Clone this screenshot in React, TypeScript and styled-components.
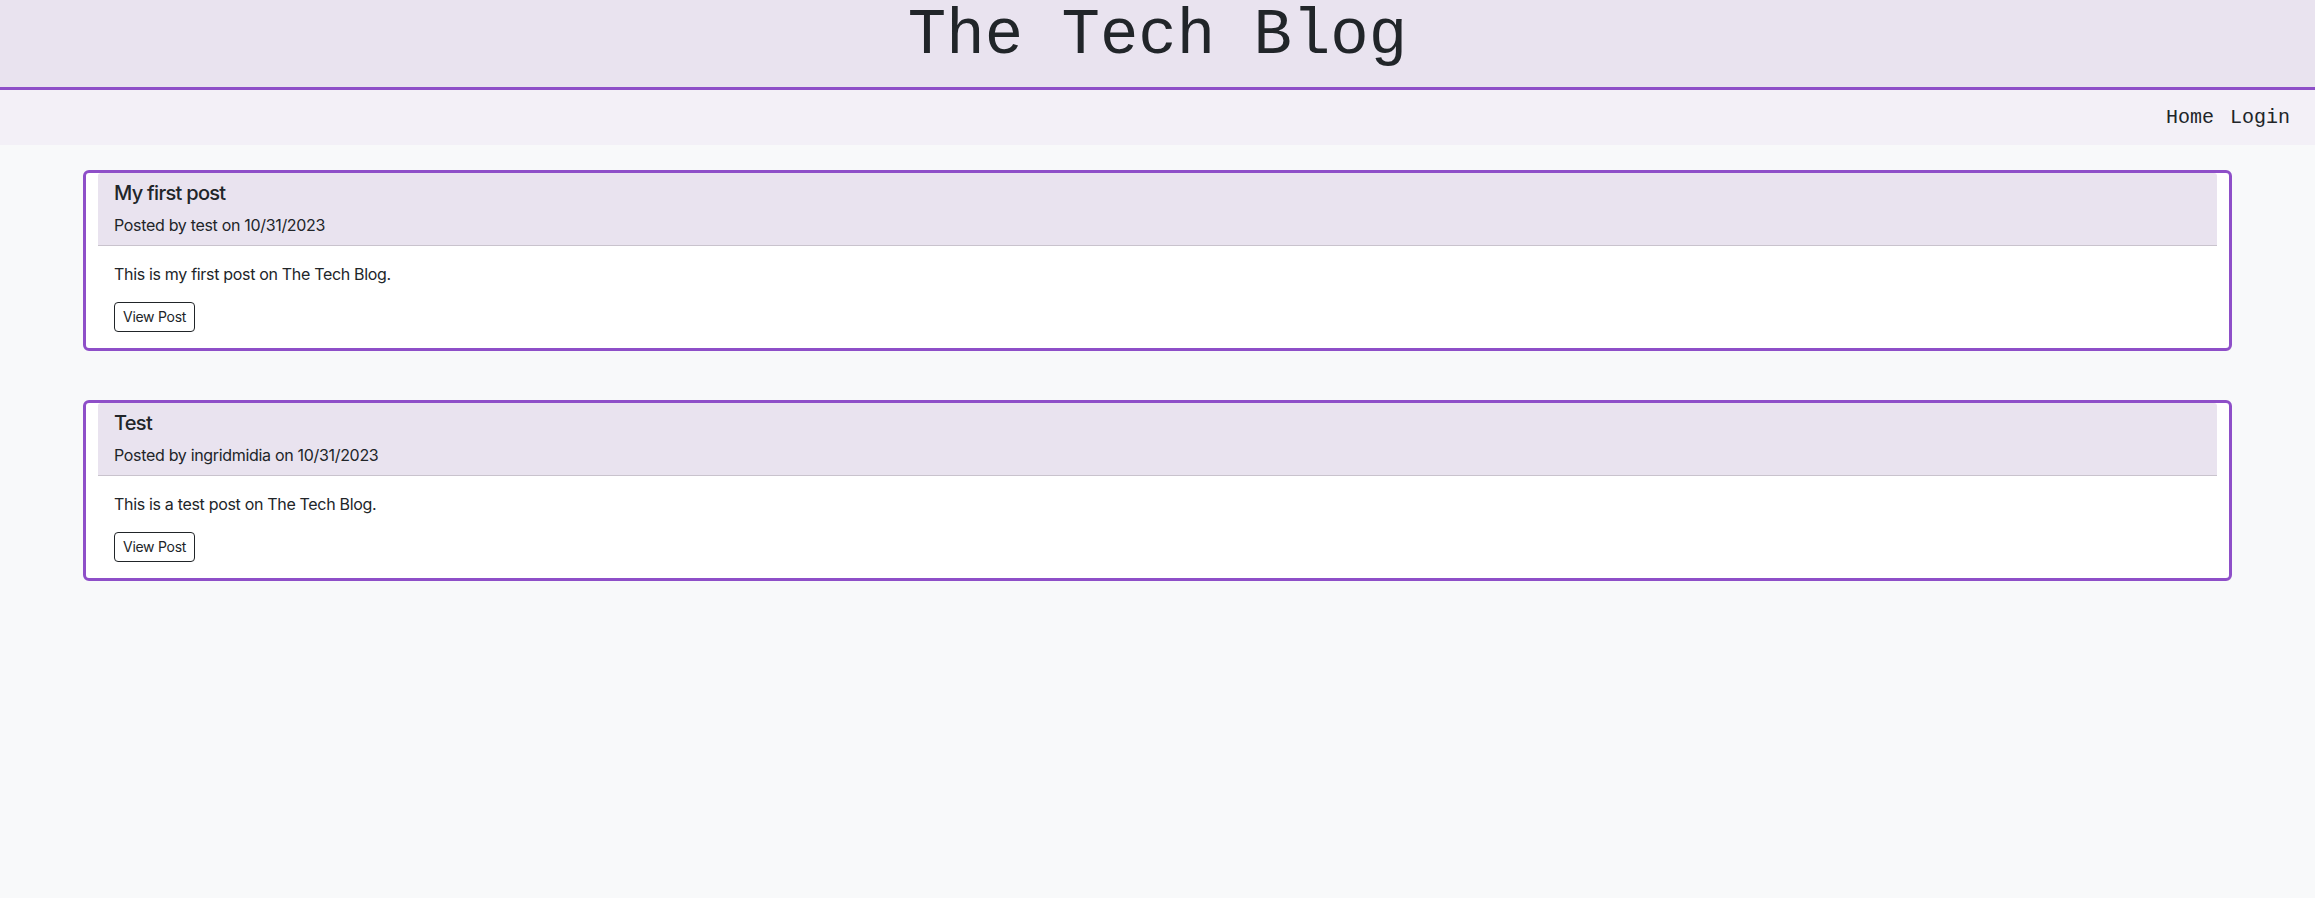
import React from 'react';
import styled, { createGlobalStyle } from 'styled-components';

const GlobalStyle = createGlobalStyle`
  html, body {
    margin: 0;
    padding: 0;
    background-color: #f8f9fa;
    color: #212529;
    font-family: Inter, "Noto Sans", sans-serif;
    letter-spacing: -0.02em;
  }
`;

const PURPLE = '#8e4fc8';

interface Post {
  id: number;
  title: string;
  author: string;
  date: string;
  body: string;
}

const posts: Post[] = [
  {
    id: 1,
    title: 'My first post',
    author: 'test',
    date: '10/31/2023',
    body: 'This is my first post on The Tech Blog.',
  },
  {
    id: 2,
    title: 'Test',
    author: 'ingridmidia',
    date: '10/31/2023',
    body: 'This is a test post on The Tech Blog.',
  },
];

const Masthead = styled.header`
  display: flex;
  justify-content: center;
  align-items: center;
  height: 72px;
  padding-bottom: 15px;
  background-color: #e9e3ef;
  border-bottom: 3px solid ${PURPLE};
`;

const SiteTitle = styled.h1`
  margin: 0;
  font-family: "Liberation Mono", "Courier New", monospace;
  font-size: 64px;
  font-weight: 400;
  line-height: 1;
  letter-spacing: 0;
  color: #212529;
`;

const NavBar = styled.nav`
  display: flex;
  justify-content: flex-end;
  align-items: center;
  gap: 16px;
  height: 55px;
  padding: 0 25px;
  background-color: #f3f0f7;
`;

const NavLink = styled.a`
  font-family: "Liberation Mono", "Courier New", monospace;
  font-size: 20px;
  letter-spacing: 0;
  color: #212529;
  text-decoration: none;
  cursor: pointer;
`;

const PostList = styled.main`
  display: flex;
  flex-direction: column;
  gap: 49px;
  padding: 25px 83px;
`;

const Card = styled.article`
  display: flex;
  flex-direction: column;
  background-color: #fff;
  border: 3px solid ${PURPLE};
  border-radius: 6px;
`;

const CardHeader = styled.div`
  margin: 0 12px;
  padding: 8px 16px;
  background-color: #e9e3ef;
  border-bottom: 1px solid #c9c3cd;
  border-radius: 3px 3px 0 0;
`;

const PostTitle = styled.h5`
  margin: 0 0 8px;
  font-size: 20px;
  font-weight: 500;
  line-height: 24px;
  letter-spacing: -0.035em;
`;

const Meta = styled.p`
  margin: 0;
  font-size: 16px;
  line-height: 24px;
`;

const CardBody = styled.div`
  padding: 16px 28px;
`;

const BodyText = styled.p`
  margin: 0 0 16px;
  font-size: 16px;
  line-height: 24px;
`;

const ViewButton = styled.button`
  padding: 4px 8px;
  font-family: Inter, "Noto Sans", sans-serif;
  font-size: 14px;
  line-height: 20px;
  letter-spacing: -0.02em;
  color: #212529;
  background-color: #fff;
  border: 1px solid #212529;
  border-radius: 4px;
  cursor: pointer;
`;

const App: React.FC = () => {
  return (
    <>
      <GlobalStyle />
      <Masthead>
        <SiteTitle>The Tech Blog</SiteTitle>
      </Masthead>
      <NavBar>
        <NavLink>Home</NavLink>
        <NavLink>Login</NavLink>
      </NavBar>
      <PostList>
        {posts.map(post => (
          <Card key={post.id}>
            <CardHeader>
              <PostTitle>{post.title}</PostTitle>
              <Meta>
                Posted by {post.author} on {post.date}
              </Meta>
            </CardHeader>
            <CardBody>
              <BodyText>{post.body}</BodyText>
              <ViewButton>View Post</ViewButton>
            </CardBody>
          </Card>
        ))}
      </PostList>
    </>
  );
};

export default App;
